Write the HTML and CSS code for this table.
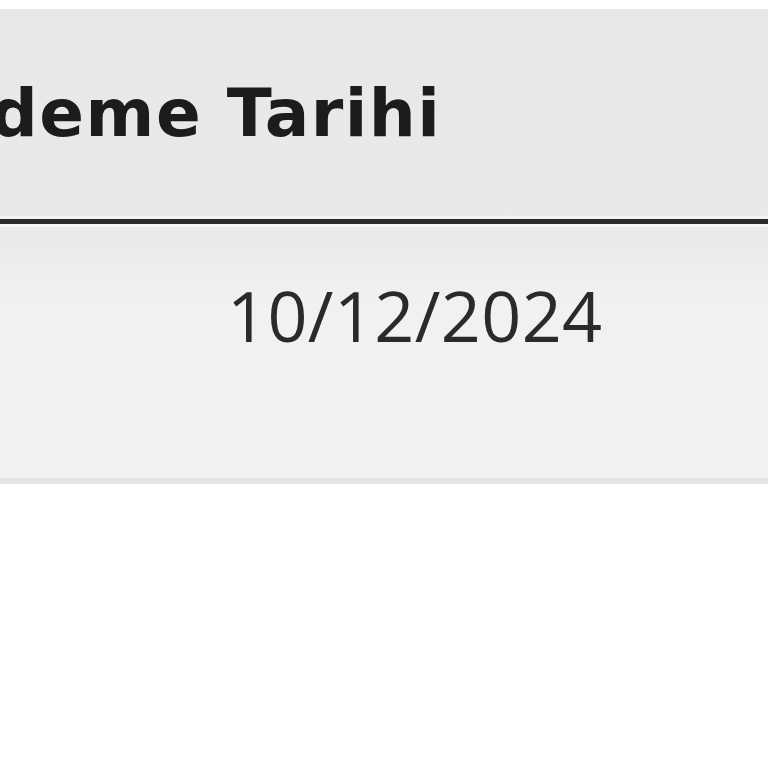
FILE: index.html
```html
<!DOCTYPE html>
<html lang="tr">
<head>
<meta charset="utf-8">
<link rel="stylesheet" href="styles.css">
<title>Ödeme Tarihi</title>
</head>
<body>
<div class="table">
  <div class="head">
    <div class="th">Ödeme Tarihi</div>
  </div>
  <div class="rule"></div>
  <div class="row">
    <div class="td">10/12/2024</div>
  </div>
</div>
</body>
</html>
```

FILE: styles.css
```css
html, body {
  margin: 0;
  padding: 0;
  background: #ffffff;
}
body {
  font-family: "Open Sans", Inter, sans-serif;
  color: #1c1c1c;
  overflow: hidden;
}
.table {
  padding-top: 9px;
  margin-left: -67px;
}
.head {
  background: linear-gradient(#e8e8e8, #e9e9e9);
  height: 207px;
  display: flex;
  align-items: center;
  border-bottom: 3px solid #f4f4f4;
}
.th {
  font-family: "DejaVu Sans", "Open Sans", sans-serif;
  font-size: 66px;
  font-weight: 700;
  letter-spacing: 1.5px;
  padding-top: 2px;
}
.rule {
  height: 5px;
  background: #2a2a2a;
  border-bottom: 3px solid #f5f5f5;
}
.row {
  background: linear-gradient(#e9e9e9, #f1f1f1 30%, #f1f1f1);
  height: 251px;
  border-bottom: 6px solid #e4e4e4;
  display: flex;
  align-items: flex-start;
}
.td {
  font-size: 70px;
  font-weight: 400;
  color: #2a2a2a;
  letter-spacing: 0.4px;
  padding-left: 294px;
  padding-top: 40px;
}
```
